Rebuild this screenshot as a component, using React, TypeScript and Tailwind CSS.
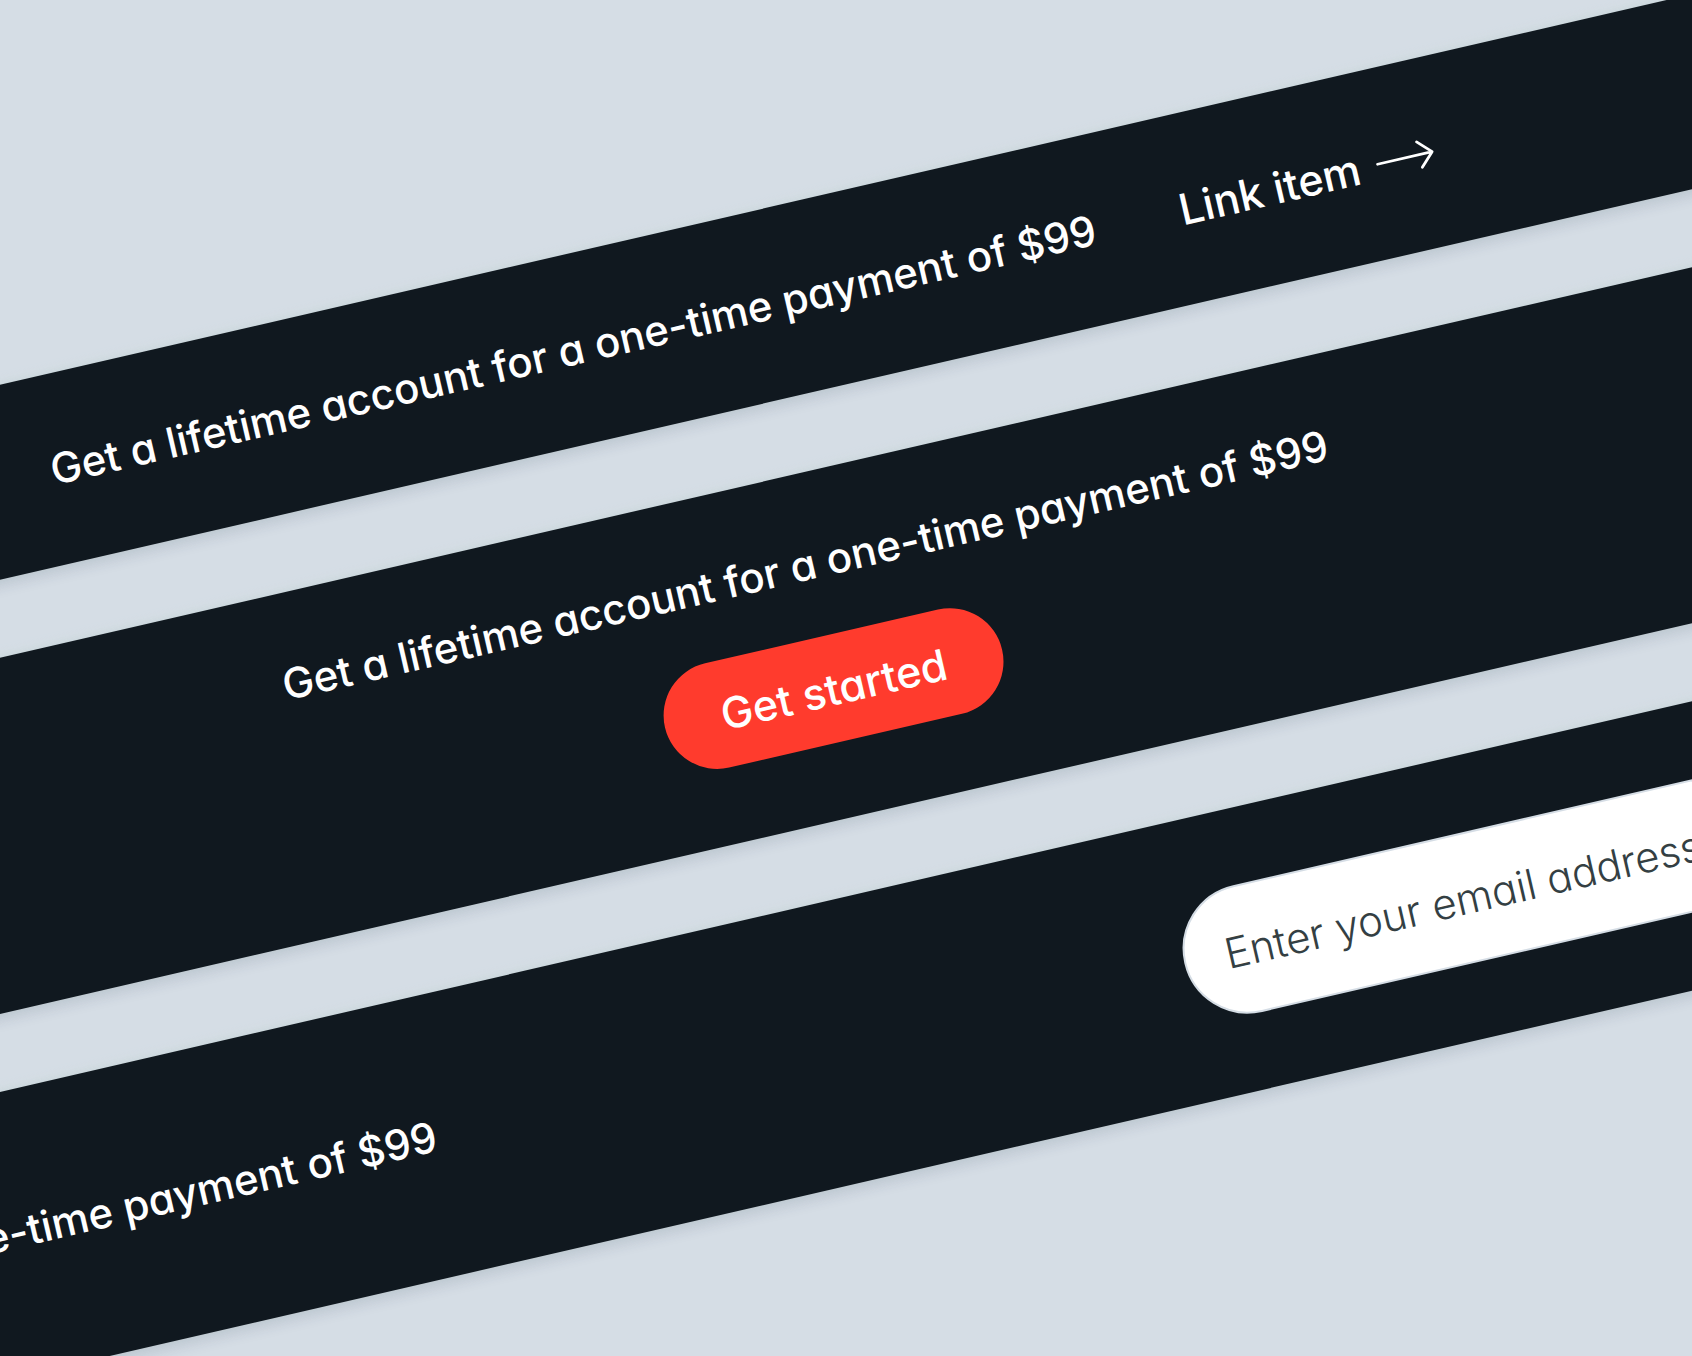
import type { ReactNode } from 'react';

const OFFER = 'Get a lifetime account for a one-time payment of $99';

function Banner({ className, children }: { className: string; children: ReactNode }) {
  return (
    <section
      className={`flex items-center bg-[#10181f] shadow-[0_6px_14px_rgba(32,40,80,0.12),0_0_12px_rgba(200,225,215,0.4)] ${className}`}
    >
      {children}
    </section>
  );
}

function ArrowRight() {
  return (
    <svg
      viewBox="0 0 60 30"
      className="h-[30px] w-[60px]"
      fill="none"
      stroke="currentColor"
      strokeWidth="2.8"
      strokeLinecap="round"
      strokeLinejoin="round"
      aria-hidden="true"
    >
      <path d="M2 15H58M45 2l13 13-13 13" />
    </svg>
  );
}

export default function App() {
  return (
    <main className="flex h-screen items-center justify-center overflow-hidden bg-[#d5dde5] pt-6 pr-6 font-['Inter',sans-serif] text-[42px] leading-[66px] font-medium text-white [font-feature-settings:'cv11']">
      <div className="flex w-[200%] shrink-0 rotate-[-13deg] flex-col gap-[76px]">
        <Banner className="justify-center gap-[86px] py-[62px] pr-2">
          <p className="whitespace-nowrap">{OFFER}</p>
          <a href="#" className="flex items-center gap-4 text-[43px] whitespace-nowrap">
            Link item
            <ArrowRight />
          </a>
        </Banner>

        <Banner className="flex-col gap-10 pt-[58px] pb-[76px]">
          <p className="whitespace-nowrap">{OFFER}</p>
          <button type="button" className="h-[107px] rounded-full bg-[#ff3b2d] px-[58px] text-[43px]">
            Get started
          </button>
        </Banner>

        <Banner className="justify-between px-[108px] py-[76px]">
          <p className="whitespace-nowrap">{OFFER}</p>
          <form className="w-[1280px]">
            <input
              type="email"
              aria-label="Email address"
              placeholder="Enter your email address"
              className="block h-[130px] w-full rounded-full border-2 border-[#d5dde5] bg-white px-10 font-light text-[#343f43] outline-none placeholder:text-[#343f43]"
            />
          </form>
        </Banner>
      </div>
    </main>
  );
}
